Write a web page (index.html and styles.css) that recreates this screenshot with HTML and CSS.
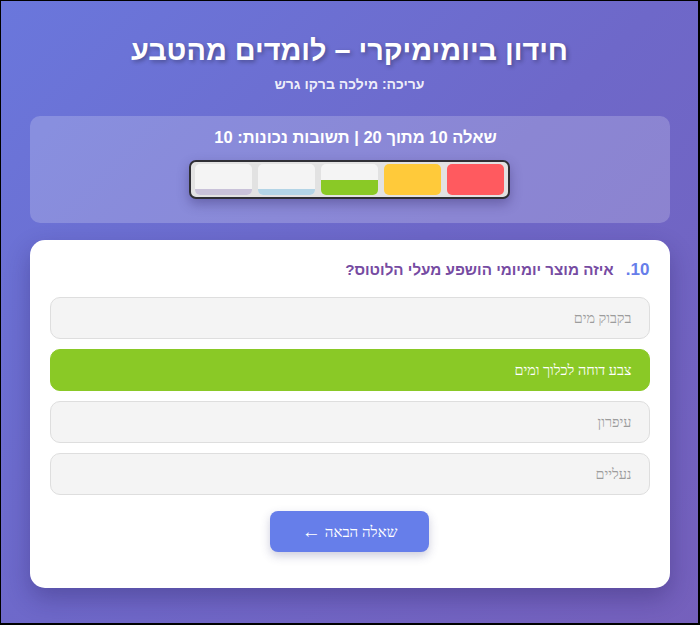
FILE: index.html
```html
<!DOCTYPE html>
<html lang="he" dir="rtl">
<head>
<meta charset="utf-8">
<title>חידון ביומימיקרי</title>
<link rel="stylesheet" href="styles.css">
</head>
<body>
<div class="frame">
  <div class="container">
    <header class="header">
      <h1 class="title">חידון ביומימיקרי – לומדים מהטבע</h1>
      <p class="subtitle">עריכה: מילכה ברקו גרש</p>
    </header>

    <section class="progress-panel">
      <div class="progress-text">שאלה 10 מתוך 20 | תשובות נכונות: 10</div>
      <div class="strip">
        <div class="cell cell-red"></div>
        <div class="cell cell-yellow"></div>
        <div class="cell cell-green"><span class="fill fill-green"></span></div>
        <div class="cell"><span class="fill fill-blue"></span></div>
        <div class="cell"><span class="fill fill-lav"></span></div>
      </div>
    </section>

    <main class="card">
      <h2 class="question"><span class="qnum">10.</span> איזה מוצר יומיומי הושפע מעלי הלוטוס?</h2>
      <div class="options">
        <button class="option" type="button">בקבוק מים</button>
        <button class="option option-correct" type="button">צבע דוחה לכלוך ומים</button>
        <button class="option" type="button">עיפרון</button>
        <button class="option" type="button">נעליים</button>
      </div>
      <div class="actions">
        <button class="next-btn" type="button">שאלה הבאה <span class="arrow">←</span></button>
      </div>
    </main>
  </div>
</div>
</body>
</html>
```

FILE: styles.css
```css
* { box-sizing: border-box; }

html, body {
  margin: 0;
  padding: 0;
}

body {
  font-family: "Liberation Sans", Arial, sans-serif;
  background: #000;
}

.frame {
  width: 700px;
  height: 625px;
  border-style: solid;
  border-color: #000;
  border-width: 1px 2px 2px 1px;
  background: linear-gradient(135deg, #6a77dc 0%, #6e68c9 50%, #7560bc 100%);
  overflow: hidden;
}

.container {
  width: 640px;
  margin: 0 auto;
  padding-top: 31px;
}

.header {
  text-align: center;
  color: #fff;
}

.title {
  margin: 0;
  font-size: 28.8px;
  line-height: 36px;
  font-weight: bold;
  text-shadow: 2px 2px 4px rgba(0, 0, 0, 0.3);
}

.subtitle {
  margin: 6px 0 0;
  font-size: 14px;
  line-height: 20px;
  font-weight: bold;
  color: rgba(255, 255, 255, 0.9);
}

.progress-panel {
  margin-top: 22px;
  background: rgba(255, 255, 255, 0.2);
  border-radius: 10px;
  padding: 11px 20px 24px;
  display: flex;
  flex-direction: column;
  align-items: center;
}

.progress-text {
  color: #fff;
  font-size: 16.5px;
  font-weight: bold;
  line-height: 20px;
  padding-left: 12px;
}

.strip {
  margin-top: 13px;
  display: flex;
  gap: 6px;
  padding: 2px 4px 2px 4px;
  background: #e2e2e2;
  border: 2px solid #2f2f35;
  border-radius: 7px;
  box-shadow: 0 5px 12px rgba(40, 30, 90, 0.35);
}

.cell {
  position: relative;
  width: 57px;
  height: 31px;
  border-radius: 5px;
  background: #f4f4f4;
  overflow: hidden;
}

.cell-red { background: #ff5a5f; }
.cell-yellow { background: #ffca3a; }

.fill {
  position: absolute;
  left: 0;
  right: 0;
  bottom: 0;
}

.fill-green { height: 15px; background: #8ac926; }
.fill-blue { height: 6px; background: #b3d4e6; }
.fill-lav { height: 6px; background: #c9c2d9; }

.card {
  margin-top: 17px;
  background: #fff;
  border-radius: 15px;
  padding: 19px 20px 36px;
  box-shadow: 0 10px 25px rgba(30, 20, 80, 0.3);
}

.question {
  margin: 0 0 16px;
  font-size: 15.2px;
  line-height: 22px;
  font-weight: bold;
  color: #764ba2;
}

.qnum {
  color: #667eea;
  font-size: 17px;
  margin-left: 8px;
}

.options {
  display: flex;
  flex-direction: column;
  gap: 10px;
}

.option {
  width: 100%;
  height: 42px;
  display: flex;
  align-items: center;
  margin: 0;
  padding: 0 17px;
  background: #f4f4f4;
  border: 1px solid #dedede;
  border-radius: 10px;
  font-family: "Liberation Serif", serif;
  font-size: 14.4px;
  color: #9c9c9c;
  text-align: right;
}

.option-correct {
  background: #8ac926;
  border-color: #8ac926;
  color: #fff;
}

.actions {
  margin-top: 16px;
  display: flex;
  justify-content: center;
}

.next-btn {
  height: 41px;
  width: 159px;
  border: none;
  border-radius: 8px;
  background: #667eea;
  color: #fff;
  font-family: "Liberation Serif", serif;
  font-size: 15px;
  line-height: 20px;
  display: flex;
  align-items: center;
  justify-content: center;
  gap: 4px;
  box-shadow: 0 4px 10px rgba(60, 60, 120, 0.25);
  cursor: pointer;
}

.arrow {
  font-family: "Liberation Serif", serif;
  font-size: 19px;
  line-height: 20px;
}
```
